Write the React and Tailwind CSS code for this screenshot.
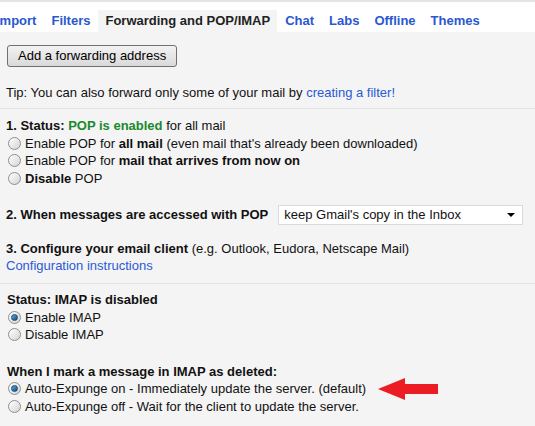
import React from 'react';

const tabs = ['Import', 'Filters', 'Forwarding and POP/IMAP', 'Chat', 'Labs', 'Offline', 'Themes'];

function Radio({ checked }) {
  return (
    <span className="w-[13px] h-[13px] shrink-0 rounded-full border border-[#8e8f8f] bg-gradient-to-br from-[#ffffff] to-[#d4d4d4] flex items-center justify-center">
      {checked && <span className="w-[7px] h-[7px] rounded-full bg-gradient-to-br from-[#5fb0e6] to-[#0d4a7e] border border-[#164b74]" />}
    </span>
  );
}

function Option({ checked, children }) {
  return (
    <label className="flex items-center h-[17.5px] whitespace-nowrap">
      <span className="ml-[8px] mr-[4px]">
        <Radio checked={checked} />
      </span>
      <span>{children}</span>
    </label>
  );
}

export default function App() {
  return (
    <div className="w-[535px] h-[426px] overflow-hidden bg-[#f4f4f4] text-[13px] text-[#111] font-['Liberation_Sans',Arial,sans-serif]">
      {/* Tabs */}
      <div className="bg-white border-t-2 border-[#e4e4e4] pt-[8px] flex items-end h-[32px] whitespace-nowrap">
        {tabs.map((t, i) => {
          const active = t === 'Forwarding and POP/IMAP';
          return (
            <div
              key={t}
              className={
                (i === 0 ? 'ml-[-11px] ' : 'ml-[1px] ') +
                (active ? 'bg-[#f4f4f4] text-[#222] ' : 'text-[#2a58d0] ') +
                'px-[7px] h-[22px] leading-[22px] font-bold'
              }
            >
              {t}
            </div>
          );
        })}
      </div>

      {/* Forwarding */}
      <div className="pt-[13px] px-[7px]">
        <button className="h-[22px] px-[10px] border border-[#707070] rounded-[3px] bg-gradient-to-b from-[#f3f3f3] to-[#d9d9d9] text-[13px] text-black leading-[20px] whitespace-nowrap">
          Add a forwarding address
        </button>
      </div>
      <div className="mt-[17px] px-[6px] leading-[17px] pb-[7px] border-b border-[#e3e3e3] whitespace-nowrap">
        Tip: You can also forward only some of your mail by{' '}
        <span className="text-[#2a5ad6]">creating a filter!</span>
      </div>

      {/* POP */}
      <div className="mt-[8px] leading-[17.5px]">
        <div className="px-[6px]">
          <b>1. Status: </b>
          <b className="text-[#198a2c]">POP is enabled</b> for all mail
        </div>
        <Option>Enable POP for <b>all mail</b> (even mail that's already been downloaded)</Option>
        <Option>Enable POP for <b>mail that arrives from now on</b></Option>
        <Option><b>Disable</b> POP</Option>
      </div>

      <div className="mt-[17px] px-[6px] flex items-center h-[22px] whitespace-nowrap">
        <b>2. When messages are accessed with POP</b>
        <div className="ml-[10px] w-[245px] h-[20px] bg-white border border-[#d6dbe2] flex items-center justify-between pl-[5px] pr-[7px]">
          <span>keep Gmail's copy in the Inbox</span>
          <svg width="8" height="4" viewBox="0 0 8 4"><path d="M0 0h8L4 4z" fill="#000" /></svg>
        </div>
      </div>

      <div className="mt-[14px] px-[6px] leading-[17px] pb-[9px] border-b border-[#e3e3e3] whitespace-nowrap">
        <div><b>3. Configure your email client</b> (e.g. Outlook, Eudora, Netscape Mail)</div>
        <div className="text-[#2a5ad6]">Configuration instructions</div>
      </div>

      {/* IMAP */}
      <div className="mt-[7px] leading-[17.5px]">
        <div className="px-[7px] font-bold">Status: IMAP is disabled</div>
        <Option checked>Enable IMAP</Option>
        <Option>Disable IMAP</Option>
      </div>

      <div className="mt-[19px] leading-[17.5px]">
        <div className="px-[7px] font-bold">When I mark a message in IMAP as deleted:</div>
        <Option checked>
          <span className="flex items-center">
            Auto-Expunge on - Immediately update the server. (default)
            <svg className="ml-[12px]" width="61" height="22" viewBox="0 0 61 22">
              <path d="M0 11L27 0V6H60V16H27V22Z" fill="#ec1c24" />
            </svg>
          </span>
        </Option>
        <Option>Auto-Expunge off - Wait for the client to update the server.</Option>
      </div>
    </div>
  );
}
